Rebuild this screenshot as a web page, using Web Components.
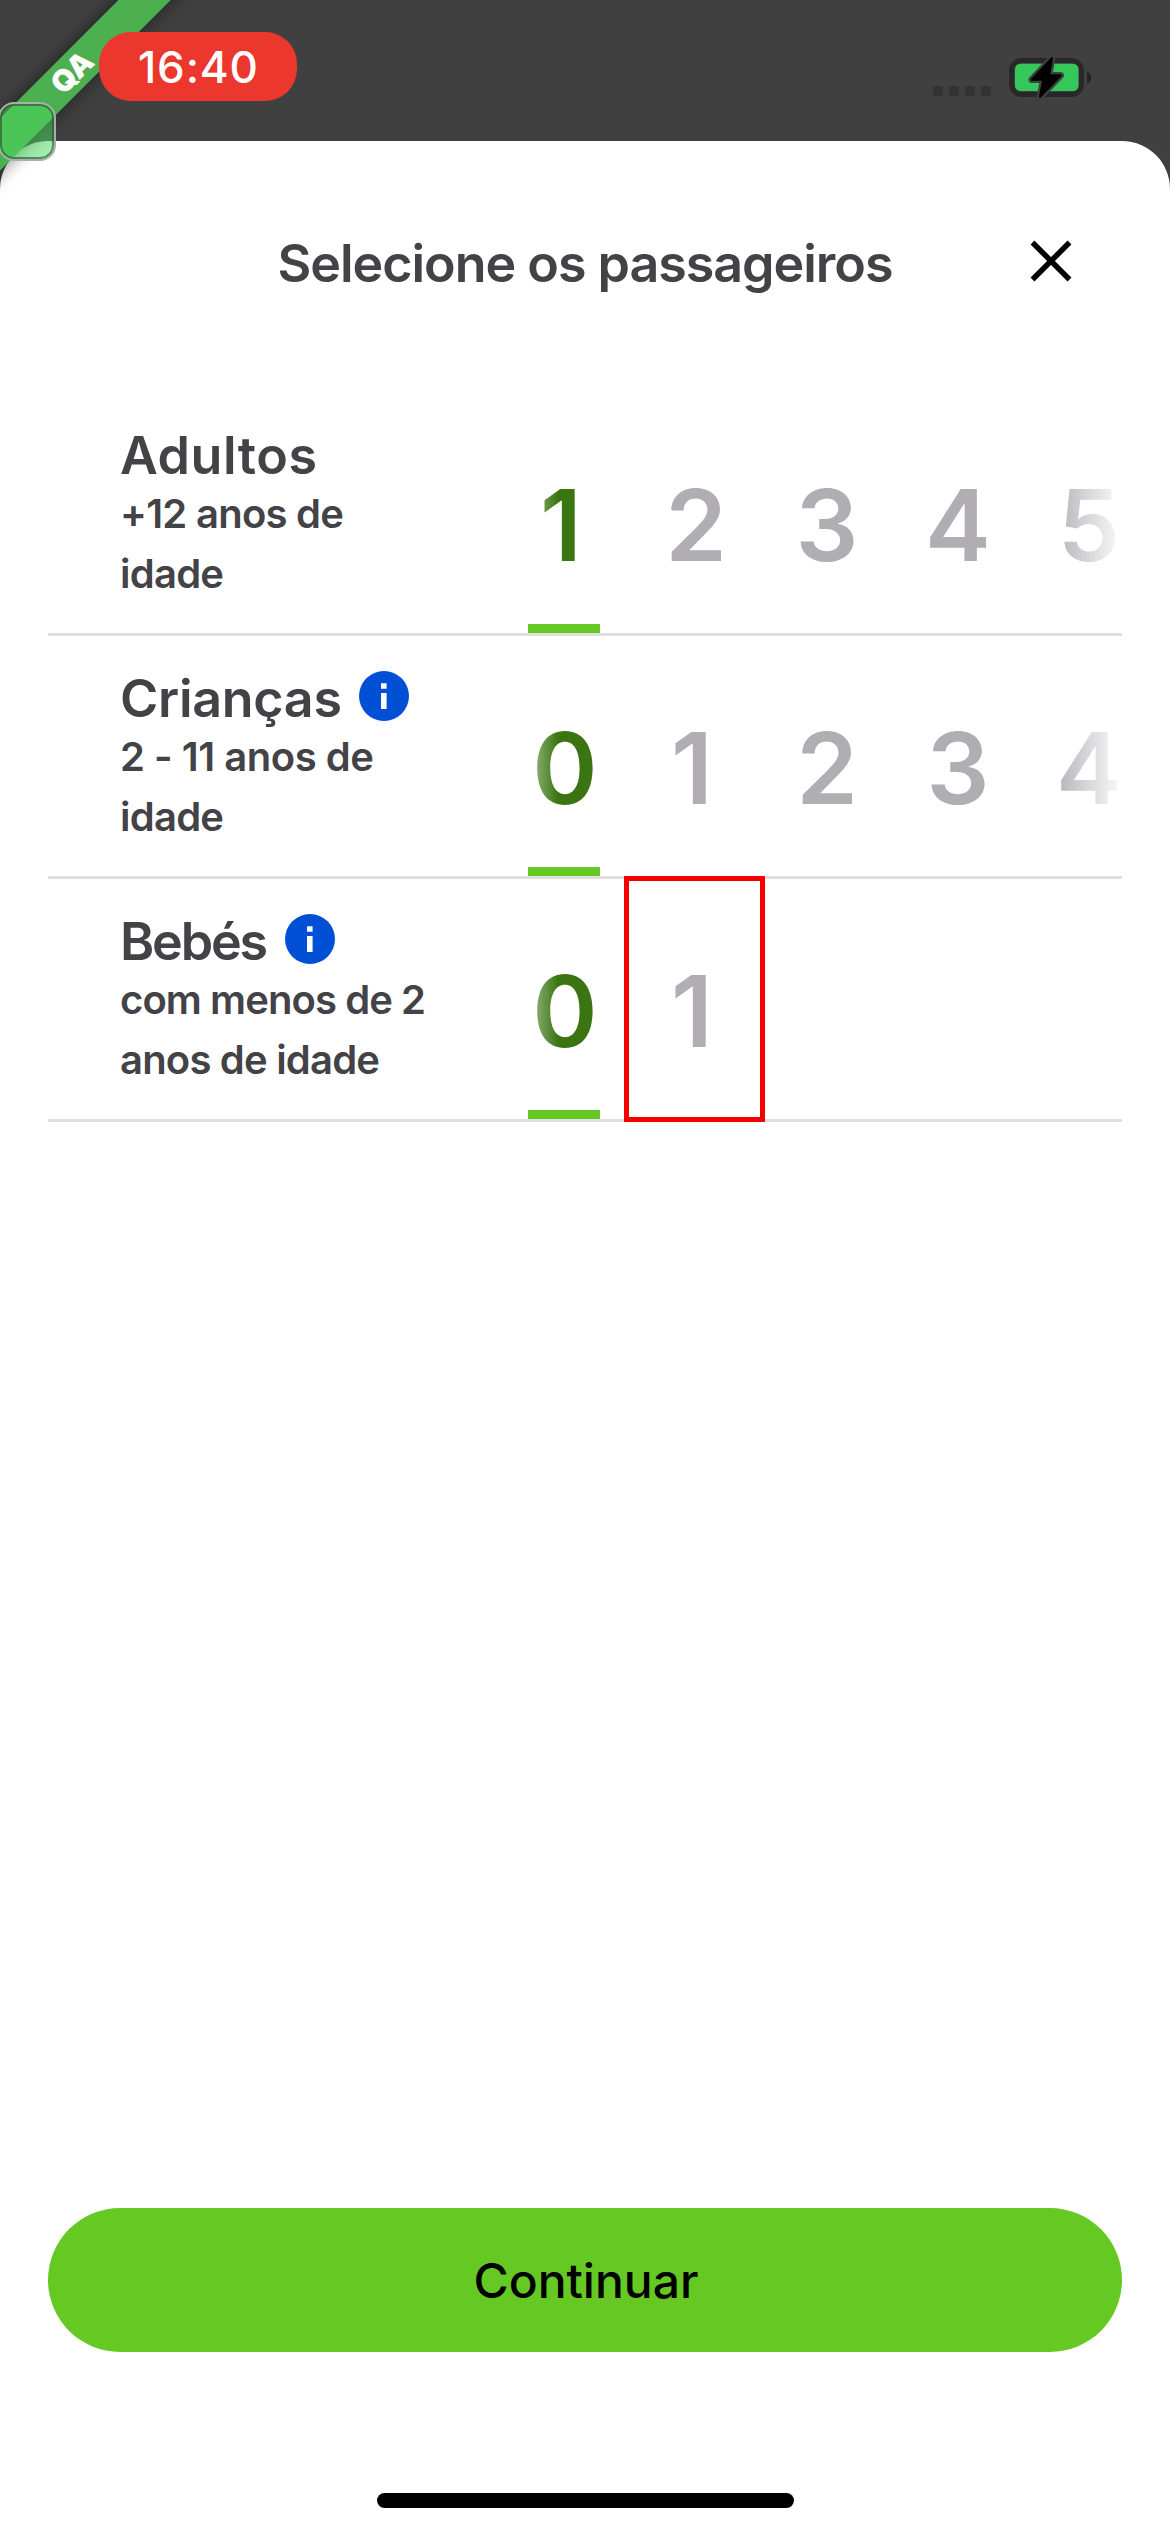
<!DOCTYPE html>
<html lang="pt">
<head>
<meta charset="utf-8">
<meta name="viewport" content="width=device-width, initial-scale=1">
<title>Selecione os passageiros</title>
<style>
html,body{margin:0;padding:0;background:#404040}
body{font-family:Inter,"Liberation Sans",sans-serif;color:#434246}
</style>
</head>
<body>
<passenger-screen></passenger-screen>
<script>
const define=(name,html,after)=>customElements.define(name,class extends HTMLElement{
  connectedCallback(){
    if(this.shadowRoot)return;
    const t=document.createElement('template');
    t.innerHTML=typeof html==='function'?html(this):html;
    this.attachShadow({mode:'open'}).appendChild(t.content.cloneNode(true));
    if(after)after(this);
  }
});

/* Text tracked so that its line has a given width. */
define('fit-text',`<style>:host{display:block;white-space:nowrap}span{display:inline-block}</style><span><slot></slot></span>`,el=>{
  const span=el.shadowRoot.querySelector('span');
  const n=el.textContent.length;
  const w=span.getBoundingClientRect().width;
  const want=+el.getAttribute('width');
  if(want&&n>1&&w){
    const s=(want-w)/(n-1);
    span.style.letterSpacing=s+'px';
    span.style.marginRight=-s+'px';
  }
});

define('info-icon',`<style>:host{display:block;width:50px;height:50px}svg{display:block}</style>
<svg width="50" height="50" viewBox="0 0 50 50"><circle cx="25" cy="25" r="25" fill="#0050d5"/><path d="M22 12.3h5.6v5.4H22zM22 22h5.6v16H22z" fill="#fff"/></svg>`);

define('status-bar',`<style>
:host{display:flex;box-sizing:border-box;height:141px;padding:32px 78px 0 99px;justify-content:space-between;align-items:flex-start}
.time{position:relative;z-index:3;box-sizing:border-box;width:198px;height:69px;border-radius:32px;background:#eb372d;color:#fff;font-size:44px;font-weight:500;line-height:69px;display:flex;justify-content:center}
.time fit-text{line-height:70px}
.right{display:flex;align-items:flex-end;gap:18px;padding-top:25px}
.dots{display:flex;gap:6px;padding-bottom:2px}
i{width:10px;height:10px;border-radius:3px;background:#323232}
svg{display:block}
</style>
<div class="time"><fit-text width="120">16:40</fit-text></div>
<div class="right"><div class="dots"><i></i><i></i><i></i><i></i></div>
<svg width="83" height="41" viewBox="1009 57 83 41">
<rect x="1011.5" y="60.5" width="70" height="34" rx="10" fill="none" stroke="#2a2729" stroke-width="5"/>
<rect x="1015" y="63.7" width="63.5" height="27.3" rx="5.5" fill="#34c759"/>
<path d="M1087 71.5q4 2 4 6.2t-4 6.2z" fill="#232123"/>
<path d="M1051.8 58.5L1032 79.6H1043.5L1040.2 96.5L1060.5 75.4H1048.8Z" fill="#404040" stroke="#404040" stroke-width="7" stroke-linejoin="round"/>
<path d="M1051.8 58.5L1032 79.6H1043.5L1040.2 96.5L1060.5 75.4H1048.8Z" fill="#000" stroke="#000" stroke-width="2.5" stroke-linejoin="round"/>
</svg></div>`);

define('qa-banner',`<style>
:host{position:absolute;left:0;top:0;width:220px;height:220px;overflow:hidden;z-index:2;pointer-events:none}
.band{position:absolute;left:-78px;top:53.5px;width:300px;height:36.5px;background:#4caf50;color:#fff;transform:rotate(-45deg);box-shadow:0 0 18px rgba(0,0,0,.5);font-size:30px;font-weight:900;line-height:36.5px;display:flex;justify-content:center}
</style><div class="band"><slot></slot></div>`);

define('debug-handle',`<style>
:host{position:absolute;left:-2px;top:102px;width:58px;height:59px;box-sizing:border-box;border:2px solid #aaaeaa;border-radius:16px;background:rgba(76,217,96,.52);box-shadow:inset 0 0 0 2px rgba(45,85,50,.65);z-index:4}
</style>`);

define('sheet-header',`<style>
:host{display:grid;grid-template-columns:1fr auto 1fr;align-items:center;height:80px;padding:83px 98px 0;font-size:52px;font-weight:600}
fit-text{grid-column:2;line-height:80px;padding-left:1px}
svg{justify-self:end;display:block;margin-bottom:7px}
</style><fit-text width="616"></fit-text>
<svg width="42" height="42" viewBox="0 0 42 42"><path d="M2.5 2.5l37 37M39.5 2.5l-37 37" stroke="#000" stroke-width="5.5" fill="none"/></svg>`,el=>{
  const f=el.shadowRoot.querySelector('fit-text');
  const g=document.createElement('fit-text');
  g.setAttribute('width',f.getAttribute('width'));
  g.textContent=el.textContent;
  f.replaceWith(g);
});

define('count-picker',el=>`<style>
:host{display:block;width:610px;height:240px;overflow:hidden}
.digits,.marks{display:flex;gap:59px;padding-left:16px}
.digits{height:231px;-webkit-mask-image:linear-gradient(90deg,transparent -10px,#000 46px,#000 538px,transparent 614px);mask-image:linear-gradient(90deg,transparent -10px,#000 46px,#000 538px,transparent 614px)}
.digits span{box-sizing:border-box;flex:none;width:72px;text-align:center;font-size:99px;font-weight:570;line-height:120px;padding-top:72px;color:#b0adb3;letter-spacing:-2px}
.digits .one{padding-right:8px}
.digits .on{color:#3a7512}
.marks i{width:72px;height:9px;background:#66c923}
</style><div class="digits">${el.getAttribute('values').split(' ').map((v,i)=>`<span class="${i?'':'on'}${v==='1'?' one':''}">${v}</span>`).join('')}</div><div class="marks"><i></i></div>`);

define('passenger-row',el=>`<style>
:host{position:relative;display:flex;box-sizing:border-box;height:243px;margin:0 48px;border-bottom:3px solid #dfdfdf}
.label{width:392px;padding:34px 0 0 72px;box-sizing:border-box}
.title{display:flex;align-items:center;height:57px;gap:17px;font-size:52px;font-weight:600;line-height:58px}
.title info-icon{margin-bottom:5px}
.sub{font-size:40px;font-weight:570;line-height:60px}
.wrap{display:flex;width:464px;flex:none}
.focus{position:absolute;left:576px;top:-3px;box-sizing:border-box;width:141px;height:246px;border:5px solid #f40000}
</style>
<div class="wrap"><div class="label">
<div class="title"><fit-text width="${el.getAttribute('name-width')}">${el.getAttribute('name')}</fit-text>${el.hasAttribute('info')?'<info-icon></info-icon>':''}</div>
<div class="sub"><fit-text width="${el.getAttribute('w1')}">${el.getAttribute('line1')}</fit-text><fit-text width="${el.getAttribute('w2')}">${el.getAttribute('line2')}</fit-text></div>
</div></div>
<count-picker values="${el.getAttribute('values')}"></count-picker>
${el.hasAttribute('focused')?'<div class="focus"></div>':''}`);

define('primary-button',`<style>
:host{display:block;margin:0 48px}
button{display:flex;justify-content:center;align-items:center;width:100%;height:144px;border:0;border-radius:72px;background:#66c923;color:#000;font:460 48px/60px Inter,"Liberation Sans",sans-serif;padding:2px 0 0 2px}
</style><button><fit-text width="225">Continuar</fit-text></button>`);

define('passenger-screen',`<style>
:host{position:relative;display:flex;flex-direction:column;width:1170px;height:2532px;overflow:hidden;background:#404040}
main{flex:1;display:flex;flex-direction:column;background:#fff;border-radius:48px 48px 0 0}
.rows{margin-top:89px}
primary-button{margin-top:auto}
.home{width:417px;height:15px;border-radius:8px;background:#000;margin:141px auto 24px}
</style>
<status-bar></status-bar>
<main>
<sheet-header>Selecione os passageiros</sheet-header>
<div class="rows">
<passenger-row name="Adultos" name-width="197" line1="+12 anos de" w1="224" line2="idade" w2="104" values="1 2 3 4 5"></passenger-row>
<passenger-row name="Crianças" name-width="222" info line1="2 - 11 anos de" w1="254" line2="idade" w2="104" values="0 1 2 3 4"></passenger-row>
<passenger-row name="Bebés" name-width="148" info line1="com menos de 2" w1="306" line2="anos de idade" w2="260" values="0 1" focused></passenger-row>
</div>
<primary-button></primary-button>
<div class="home"></div>
</main>
<qa-banner>QA</qa-banner>
<debug-handle></debug-handle>`);
</script>
</body>
</html>
